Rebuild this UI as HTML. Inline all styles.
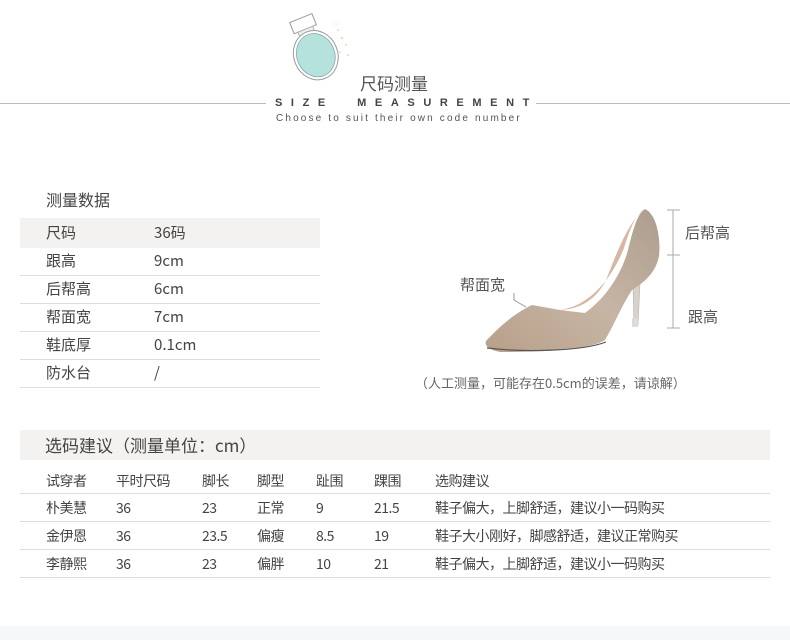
<!DOCTYPE html>
<html><head><meta charset="utf-8"><style>
*{margin:0;padding:0;box-sizing:border-box}
body{width:790px;height:640px;background:#fff;position:relative;overflow:hidden;font-family:"Noto Sans CJK SC","Liberation Sans",sans-serif;color:#444}
.a{position:absolute;white-space:nowrap;line-height:20px}
.hl{position:absolute;height:1px;background:#ddd}
.t1{font-size:15px;color:#444}
.t2{font-size:14px;color:#444;letter-spacing:-0.5px}
</style></head><body>
<!-- header -->
<svg class="a" style="left:280px;top:5px" width="80" height="80" viewBox="280 5 80 80">
<g transform="rotate(-22 318 50)">
<rect x="302" y="14" width="24" height="12" fill="#fff" stroke="#999" stroke-width="1"/>
<rect x="306" y="26" width="16" height="5" fill="#eee" stroke="#aaa" stroke-width="0.8"/>
<ellipse cx="314" cy="54" rx="22" ry="25" fill="#fff" stroke="#999" stroke-width="1"/>
<ellipse cx="314" cy="54" rx="19" ry="22" fill="#b5e2dc" stroke="#8aa" stroke-width="0.8"/>
</g>
<g fill="#cfe8c0"><circle cx="338" cy="30" r="1"/><circle cx="342" cy="38" r="1.2"/><circle cx="346" cy="45" r="1"/><circle cx="340" cy="52" r="1"/><circle cx="348" cy="55" r="1"/><circle cx="336" cy="24" r="0.8"/></g>
</svg>
<div class="a" style="left:360px;top:73px;font-size:17px;color:#555">尺码测量</div>
<div class="hl" style="left:0;top:103px;width:266px;background:#bbb"></div>
<div class="hl" style="left:536px;top:103px;width:254px;background:#bbb"></div>
<div class="a" style="left:275px;top:93px;font-size:11px;font-weight:bold;letter-spacing:8.6px;color:#444;font-family:'Liberation Sans',sans-serif">SIZE&nbsp;&nbsp;MEASUREMENT</div>
<div class="a" style="left:276px;top:109px;font-size:10px;letter-spacing:2.15px;color:#555;font-family:'Liberation Sans',sans-serif">Choose to suit their own code number</div>

<!-- table 1 -->
<div class="a" style="left:46px;top:189px;font-size:16px;color:#444">测量数据</div>
<div class="a" style="left:20px;top:218px;width:300px;height:30px;background:#f3f2f0"></div>
<div class="a t1" style="left:46px;top:223px">尺码</div><div class="a t1" style="left:154px;top:223px">36码</div>
<div class="a t1" style="left:46px;top:251px">跟高</div><div class="a t1" style="left:154px;top:251px">9cm</div>
<div class="hl" style="left:20px;top:275px;width:300px"></div>
<div class="a t1" style="left:46px;top:279px">后帮高</div><div class="a t1" style="left:154px;top:279px">6cm</div>
<div class="hl" style="left:20px;top:303px;width:300px"></div>
<div class="a t1" style="left:46px;top:307px">帮面宽</div><div class="a t1" style="left:154px;top:307px">7cm</div>
<div class="hl" style="left:20px;top:331px;width:300px"></div>
<div class="a t1" style="left:46px;top:335px">鞋底厚</div><div class="a t1" style="left:154px;top:335px">0.1cm</div>
<div class="hl" style="left:20px;top:359px;width:300px"></div>
<div class="a t1" style="left:46px;top:363px">防水台</div><div class="a t1" style="left:154px;top:363px">/</div>
<div class="hl" style="left:20px;top:387px;width:300px"></div>

<!-- shoe -->
<svg class="a" style="left:440px;top:200px" width="350" height="170" viewBox="440 200 350 170">
<defs><linearGradient id="g" x1="0" y1="1" x2="1" y2="0"><stop offset="0" stop-color="#b8a08a"/><stop offset="0.5" stop-color="#c6b5a4"/><stop offset="1" stop-color="#ad9d8e"/></linearGradient></defs>
<path d="M633,285 L641,262 L638,325 L634,326 Z" fill="#d8d2cc" stroke="#b9b0a8" stroke-width="0.6"/>
<rect x="632" y="318" width="6" height="9" fill="#e0dbd6"/>
<path d="M486,341 C500,326 515,313 532,305 L560,310 L585,313 C608,296 622,272 628,250 C633,230 637,214 645,209 C656,214 661,236 659,256 C656,272 645,282 632,290 C622,305 614,325 605,340 C590,350 540,352 500,352 C490,350 484,346 486,341 Z" fill="url(#g)"/>
<path d="M560,310 C590,306 612,278 624,248 C630,228 636,214 645,209 C628,222 618,250 606,280 C596,300 580,309 560,310 Z" fill="#d7b6a2"/>
<path d="M487,348 C520,352 580,352 606,342" stroke="#555" stroke-width="1.2" fill="none"/>
<line x1="673" y1="210" x2="673" y2="328" stroke="#aaa"/>
<line x1="667" y1="210" x2="680" y2="210" stroke="#aaa"/>
<line x1="667" y1="255" x2="680" y2="255" stroke="#aaa"/>
<line x1="667" y1="328" x2="680" y2="328" stroke="#aaa"/>
<path d="M514,293 L514,300 L526,307" stroke="#999" fill="none"/>
</svg>
<div class="a" style="left:685px;top:223px;font-size:15px;color:#555">后帮高</div>
<div class="a" style="left:688px;top:307px;font-size:15px;color:#555">跟高</div>
<div class="a" style="left:460px;top:275px;font-size:15px;color:#555">帮面宽</div>
<div class="a" style="left:415px;top:373px;font-size:13px;color:#666">（人工测量，可能存在0.5cm的误差，请谅解）</div>

<!-- table 2 -->
<div class="a" style="left:20px;top:430px;width:750px;height:30px;background:#f3f2f0"></div>
<div class="a" style="left:45px;top:435px;font-size:17px;color:#444">选码建议（测量单位：cm）</div>
<div class="a t2" style="left:46px;top:471px">试穿者</div><div class="a t2" style="left:116px;top:471px">平时尺码</div><div class="a t2" style="left:202px;top:471px">脚长</div><div class="a t2" style="left:257px;top:471px">脚型</div><div class="a t2" style="left:316px;top:471px">趾围</div><div class="a t2" style="left:374px;top:471px">踝围</div><div class="a t2" style="left:435px;top:471px">选购建议</div>
<div class="hl" style="left:20px;top:493px;width:750px"></div>
<div class="a t2" style="left:46px;top:498px">朴美慧</div><div class="a t2" style="left:116px;top:498px">36</div><div class="a t2" style="left:202px;top:498px">23</div><div class="a t2" style="left:257px;top:498px">正常</div><div class="a t2" style="left:316px;top:498px">9</div><div class="a t2" style="left:374px;top:498px">21.5</div><div class="a t2" style="left:435px;top:498px">鞋子偏大，上脚舒适，建议小一码购买</div>
<div class="hl" style="left:20px;top:521px;width:750px"></div>
<div class="a t2" style="left:46px;top:526px">金伊恩</div><div class="a t2" style="left:116px;top:526px">36</div><div class="a t2" style="left:202px;top:526px">23.5</div><div class="a t2" style="left:257px;top:526px">偏瘦</div><div class="a t2" style="left:316px;top:526px">8.5</div><div class="a t2" style="left:374px;top:526px">19</div><div class="a t2" style="left:435px;top:526px">鞋子大小刚好，脚感舒适，建议正常购买</div>
<div class="hl" style="left:20px;top:549px;width:750px"></div>
<div class="a t2" style="left:46px;top:554px">李静熙</div><div class="a t2" style="left:116px;top:554px">36</div><div class="a t2" style="left:202px;top:554px">23</div><div class="a t2" style="left:257px;top:554px">偏胖</div><div class="a t2" style="left:316px;top:554px">10</div><div class="a t2" style="left:374px;top:554px">21</div><div class="a t2" style="left:435px;top:554px">鞋子偏大，上脚舒适，建议小一码购买</div>
<div class="hl" style="left:20px;top:577px;width:750px"></div>
<div class="a" style="left:0;top:626px;width:790px;height:14px;background:#f6f7fb"></div>
</body></html>
